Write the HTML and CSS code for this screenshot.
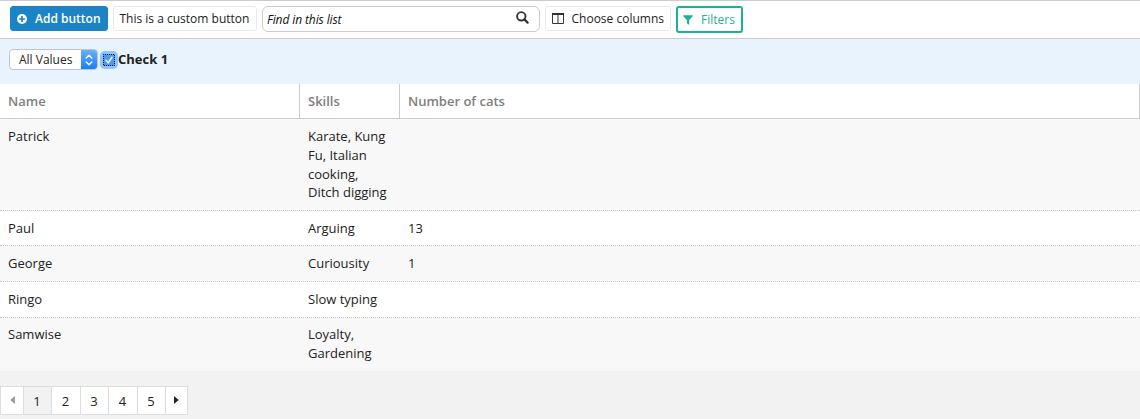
FILE: index.html
```html
<!DOCTYPE html>
<html lang="en">
<head>
<meta charset="utf-8">
<title>List</title>
<link rel="stylesheet" href="styles.css">
</head>
<body>
<div class="toolbar">
  <button class="btn primary"><svg width="10" height="10" viewBox="0 0 10 10"><circle cx="5" cy="5" r="5" fill="#fff"/><path d="M5 2v6M2 5h6" stroke="#1c84c6" stroke-width="1.700"/></svg><span>Add button</span></button>
  <button class="btn custom">This is a custom button</button>
  <div class="search"><span>Find in this list</span><svg width="13" height="13" viewBox="0 0 13 13" fill="none" stroke="#333"><circle cx="5.3" cy="5.3" r="4.2" stroke-width="1.9"/><path d="M8.4 8.4l3.2 3.2" stroke-width="2.2" stroke-linecap="round"/></svg></div>
  <button class="btn choose"><svg width="12" height="11" viewBox="0 0 12 11" fill="none" stroke="#333"><path d="M.5 1v9.5h11V1M6 1v9.5"/><path d="M0 1h12" stroke-width="2"/></svg><span>Choose columns</span></button>
  <button class="btn filters"><svg width="10" height="10" viewBox="0 0 10 10"><path d="M.3.3h9.4v1L6.2 5v5L3.8 8V5L.3 1.300z" fill="#1ab394"/></svg><span>Filters</span></button>
</div>
<div class="filterbar">
  <div class="select"><span class="value">All Values</span><span class="arrows"><svg width="8" height="12" viewBox="0 0 8 12" fill="none" stroke="#fff" stroke-width="1.4" stroke-linecap="round" stroke-linejoin="round"><path d="M1.200 4L4 1.200 6.800 4M1.200 8L4 10.800 6.800 8"/></svg></span></div>
  <span class="check"><svg width="12" height="12" viewBox="0 0 12 12"><rect width="12" height="12" fill="#4a9cf7"/><rect x=".5" y=".5" width="11" height="11" fill="none" stroke="#111" stroke-dasharray="1 1" stroke-dashoffset=".5"/><path d="M3 6.300l2.200 2.400L9 3.300" fill="none" stroke="#fff" stroke-width="1.500" stroke-linecap="round"/></svg></span>
  <b class="check-label">Check 1</b>
</div>
<div class="table">
  <div class="row head"><div>Name</div><div>Skills</div><div>Number of cats</div></div>
  <div class="row odd r1"><div>Patrick</div><div>Karate, Kung Fu, Italian cooking,<br>Ditch digging</div><div></div></div>
  <div class="row r2"><div>Paul</div><div>Arguing</div><div>13</div></div>
  <div class="row odd r3"><div>George</div><div>Curiousity</div><div>1</div></div>
  <div class="row r4"><div>Ringo</div><div>Slow typing</div><div></div></div>
  <div class="row odd r5"><div>Samwise</div><div>Loyalty, Gardening</div><div></div></div>
</div>
<div class="pager">
  <span class="page prev"><svg width="5" height="8" viewBox="0 0 5 8"><path d="M5 0v8L.3 4z" fill="#999"/></svg></span>
  <span class="page current">1</span>
  <span class="page wide">2</span>
  <span class="page">3</span>
  <span class="page wide">4</span>
  <span class="page">5</span>
  <span class="page next"><svg width="5" height="8" viewBox="0 0 5 8"><path d="M0 0v8l4.700-4z" fill="#222"/></svg></span>
</div>
</body>
</html>
```
FILE: styles.css
```css
* { box-sizing: border-box; }
body {
  margin: 0;
  height: 419px;
  overflow: hidden;
  background: #f2f2f2;
  color: #222;
  font: 13px/18.570px "Open Sans", sans-serif;
}
svg { display: block; flex: none; }
.toolbar {
  display: flex;
  align-items: flex-start;
  gap: 5px;
  height: 39px;
  padding: 5px 10px 0;
  border-top: 1px solid #ccc;
  border-bottom: 1px solid #ccc;
  background: #fff;
}
.btn {
  display: flex;
  align-items: center;
  height: 25px;
  margin: 0;
  padding: 0 6px;
  border: 1px solid #e7eaec;
  border-radius: 3px;
  background: #fff;
  color: #222;
  font: 12px/18px "Open Sans", sans-serif;
  white-space: nowrap;
}
.primary {
  width: 98px;
  gap: 8px;
  border-color: #1c84c6;
  background: #1c84c6;
  color: #fff;
  font-weight: 600;
}
.custom { width: 144px; padding-left: 5.500px; }
.search {
  display: flex;
  align-items: center;
  justify-content: space-between;
  width: 278px;
  height: 26px;
  padding: 0 10px 0 4px;
  border: 1px solid #ccc;
  border-radius: 6px;
  font-size: 12px;
  letter-spacing: -0.1px;
  font-style: italic;
  color: #111;
}
.search span { padding-top: 2px; }
.search svg { margin-top: -3px; }
.choose { width: 126px; gap: 8px; padding-left: 5.500px; }
.filters {
  width: 67px;
  height: 27px;
  gap: 8px;
  padding-left: 5px;
  border: 2px solid #1ab394;
  color: #1ab394;
}
.filterbar {
  display: flex;
  align-items: flex-start;
  height: 45px;
  padding: 10px 9px 0;
  background: #e8f3fd;
}
.select {
  display: flex;
  width: 89px;
  height: 21px;
  border: 1px solid #bfc5ca;
  border-radius: 4px;
  background: #fff;
  overflow: hidden;
}
.value { width: 71px; padding-left: 9px; font-size: 12px; line-height: 19px; }
.arrows {
  display: flex;
  align-items: center;
  justify-content: center;
  flex: 1;
  background: linear-gradient(#6bb1fa, #167efb);
}
.check {
  margin: 5px 3px 0 5px;
  border-radius: 2px;
  box-shadow: 0 0 0 3px #8fc3f8;
}
.check-label { line-height: 21px; }
.row {
  display: grid;
  grid-template-columns: 300px 100px 1fr;
  border-bottom: 1px dotted #c8c8c8;
  background: #fff;
}
.row > div { padding: 8px; }
.odd { background: #f8f8f8; }
.head {
  height: 35px;
  border-bottom: 1px solid #ccc;
  color: #808080;
  font-weight: 600;
}
.head > div { border-right: 1px solid #ccc; }
.r1 { height: 92px; }
.r1 > div { padding-top: 8.400px; }
.r2 { height: 35px; }
.r3 { height: 36px; }
.r4 { height: 36px; }
.r5 { height: 53px; border-bottom: 0; }
.r5 > div { padding-top: 7px; }
.pager { display: flex; margin-top: 15px; }
.page {
  display: flex;
  align-items: center;
  justify-content: center;
  width: 29px;
  height: 29px;
  margin-right: -1px;
  padding: 1px 1px 0 0;
  border: 1px solid #ddd;
  background: #fff;
}
.wide { width: 30px; }
.prev { width: 24px; }
.next { width: 23px; }
.prev, .next { padding: 0 0 1px; }
.current { background: #f2f2f2; }
```
